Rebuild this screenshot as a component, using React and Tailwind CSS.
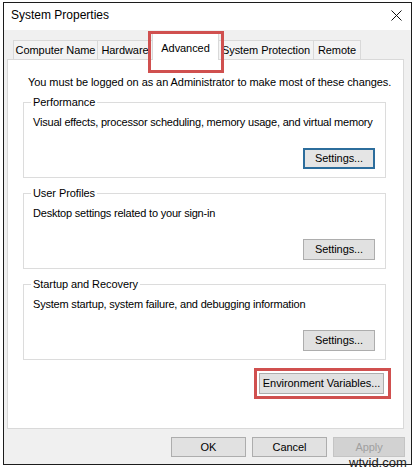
import React from 'react';

const Btn = ({ children, focused, disabled, className = '' }) => (
    <button
        className={`flex items-center justify-center leading-none whitespace-nowrap ${focused
            ? 'border-2 border-[#2c6d9c] bg-[#e5e5e5]'
            : disabled
                ? 'border border-[#c4c4c4] bg-[#d2d2d2] text-[#a0a0a0]'
                : 'border border-[#adadad] bg-[#e1e1e1]'
            } ${className}`}
    >
        {children}
    </button>
);

const Group = ({ title, text, focused, className = '' }) => (
    <fieldset className={`w-[363px] min-w-0 border border-[#dcdcdc] pl-[9px] pr-[10px] pb-[8px] ${className}`}>
        <legend className="-ml-[2px] px-[2px] leading-[14px]">{title}</legend>
        <p className="mt-[6px] leading-[14px] whitespace-nowrap tracking-[-0.2px]">{text}</p>
        <div className="mt-[19px] flex justify-end">
            <Btn focused={focused} className="w-[72px] h-[21px]">Settings...</Btn>
        </div>
    </fieldset>
);

const tabs = [
    { name: 'Computer Name', w: 'w-[85px]' },
    { name: 'Hardware', w: 'w-[56px]' },
    { name: 'Advanced', w: 'w-[67px]', active: true },
    { name: 'System Protection', w: 'w-[96px]' },
    { name: 'Remote', w: 'w-[48px]' },
];

export default function App() {
    return (
        <div className="w-[417px] h-[471px] bg-white pt-[2px] pl-[3px] font-['Liberation_Sans',Arial,sans-serif] text-[11px] tracking-[-0.07px] text-black">
            <div className="relative w-[409px] h-[463px] border border-[#1c1c1c] bg-[#f0f0f0] flex flex-col">
                {/* title bar */}
                <div className="h-[27px] bg-white flex items-center justify-between pl-[7px] pr-[9px] pb-[3px]">
                    <span className="text-[12px] tracking-normal">System Properties</span>
                    <svg width="11" height="11" viewBox="0 0 11 11" fill="none" stroke="#111" strokeWidth="1">
                        <path d="M0.5 0.5L10.5 10.5M10.5 0.5L0.5 10.5" />
                    </svg>
                </div>

                {/* tabs */}
                <div className="mt-[3px] pl-[9px] flex items-end whitespace-nowrap">
                    {tabs.map((t, i) =>
                        t.active ? (
                            <div
                                key={t.name}
                                className={`relative z-10 ${t.w} h-[27px] -mb-px -ml-px bg-white border-x border-t border-[#d9d9d9] flex justify-center pt-[7px] leading-[14px]`}
                            >
                                {t.name}
                                <div className="absolute -left-[5px] -top-[3px] w-[76px] h-[42px] border-[3px] border-[#d0504f]" />
                            </div>
                        ) : (
                            <div
                                key={t.name}
                                className={`${t.w} h-[19px] ${i > 0 ? '-ml-px' : ''} bg-[#f3f3f3] border-x border-t border-[#d9d9d9] flex justify-center pt-[2px] leading-[14px]`}
                            >
                                {t.name}
                            </div>
                        )
                    )}
                </div>

                {/* panel */}
                <div className="ml-[3px] w-[397px] h-[370px] border border-[#d9d9d9] bg-white pl-[15px] pt-[15px]">
                    <p className="ml-[5px] leading-[14px] whitespace-nowrap">
                        You must be logged on as an Administrator to make most of these changes.
                    </p>
                    <Group
                        className="mt-[6px]"
                        title="Performance"
                        text="Visual effects, processor scheduling, memory usage, and virtual memory"
                        focused
                    />
                    <Group
                        className="mt-[8px]"
                        title="User Profiles"
                        text="Desktop settings related to your sign-in"
                    />
                    <Group
                        className="mt-[8px]"
                        title="Startup and Recovery"
                        text="System startup, system failure, and debugging information"
                    />
                    <div className="mt-[8px] w-[368px] flex justify-end">
                        <div className="border-[3px] border-[#d0504f] pl-[2px] pr-[4px] py-[2px]">
                            <Btn className="w-[125px] h-[21px]">Environment Variables...</Btn>
                        </div>
                    </div>
                </div>

                {/* footer */}
                <div className="mt-[8px] pr-[6px] flex justify-end gap-[6px]">
                    <Btn className="w-[75px] h-[20px]">OK</Btn>
                    <Btn className="w-[75px] h-[20px]">Cancel</Btn>
                    <Btn disabled className="w-[72px] h-[20px]">Apply</Btn>
                </div>

                <span className="absolute left-[345px] top-[453px] text-[13px] leading-[13px] tracking-normal text-[#222]">wtvid.com</span>
            </div>
        </div>
    );
}
